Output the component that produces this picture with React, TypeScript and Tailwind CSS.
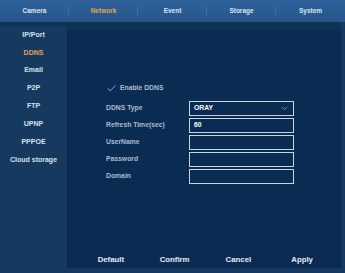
import { Check, ChevronDown } from "lucide-react";

const tabs = ["Camera", "Network", "Event", "Storage", "System"];
const menu = ["IP/Port", "DDNS", "Email", "P2P", "FTP", "UPNP", "PPPOE", "Cloud storage"];

function Field({ label, value, select }: { label: string; value?: string; select?: boolean }) {
  return (
    <div className="flex items-center h-[17px]">
      <span className="w-[83px] text-[6.8px] font-bold text-[#a9bbd3]">{label}</span>
      <div className="w-[105px] h-[15px] border border-[#c9d4e2] flex items-center justify-between px-[4px]">
        <span className="text-[6.8px] font-bold text-white">{value}</span>
        {select && <ChevronDown size={9} strokeWidth={1.5} className="text-[#c9d4e2]" />}
      </div>
    </div>
  );
}

export default function App() {
  return (
    <div
      className="w-[345px] h-[273px] bg-[#163960] flex flex-col overflow-hidden"
      style={{ fontFamily: '"Liberation Sans", Arial, sans-serif' }}
    >
      {/* top tabs */}
      <div className="h-[22px] bg-gradient-to-b from-[#2e629b] to-[#265689] flex items-center shrink-0">
        {tabs.map((t, i) => (
          <div key={t} className="flex-1 h-full flex items-center justify-center relative">
            <span className={`text-[6.5px] font-bold ${t === "Network" ? "text-[#e0a255]" : "text-[#dbe5f1]"}`}>{t}</span>
            {i < tabs.length - 1 && <div className="absolute right-0 top-[6px] h-[10px] w-px bg-[#3c6da3]" />}
          </div>
        ))}
      </div>

      <div className="flex flex-1 min-h-0">
        {/* sidebar */}
        <div className="w-[67px] flex flex-col items-center border-t-[4px] border-[#0f3257]">
          {menu.map((m) => (
            <div
              key={m}
              className={`h-[17.9px] flex items-center text-[7px] font-bold ${m === "DDNS" ? "text-[#e0a255]" : "text-[#d6e1ee]"}`}
            >
              {m}
            </div>
          ))}
        </div>

        {/* main panel */}
        <div className="flex-1 mr-[4px] mb-[5px] flex flex-col border-t-[8px] border-[#0f3257]">
          <div className="flex-1 bg-[#0b2c52] border-l border-[#0a2748] flex flex-col">
            <div className="pl-[38px] pt-[50px] flex flex-col">
              <div className="flex items-center h-[17px] mb-[3px]">
                <Check size={11} strokeWidth={2} className="text-[#8fb3dc] mr-[3px]" />
                <span className="text-[6.8px] font-bold text-[#a9bbd3]">Enable DDNS</span>
              </div>
              <Field label="DDNS Type" value="ORAY" select />
              <Field label="Refresh Time(sec)" value="60" />
              <Field label="UserName" />
              <Field label="Password" />
              <Field label="Domain" />
            </div>
            <div className="mt-auto h-[16px] pl-[11px] pr-[7px] flex items-center">
              {["Default", "Confirm", "Cancel", "Apply"].map((b) => (
                <div key={b} className="flex-1 flex justify-center text-[7.8px] font-bold text-[#e6edf6]">
                  {b}
                </div>
              ))}
            </div>
          </div>
        </div>
      </div>
    </div>
  );
}
